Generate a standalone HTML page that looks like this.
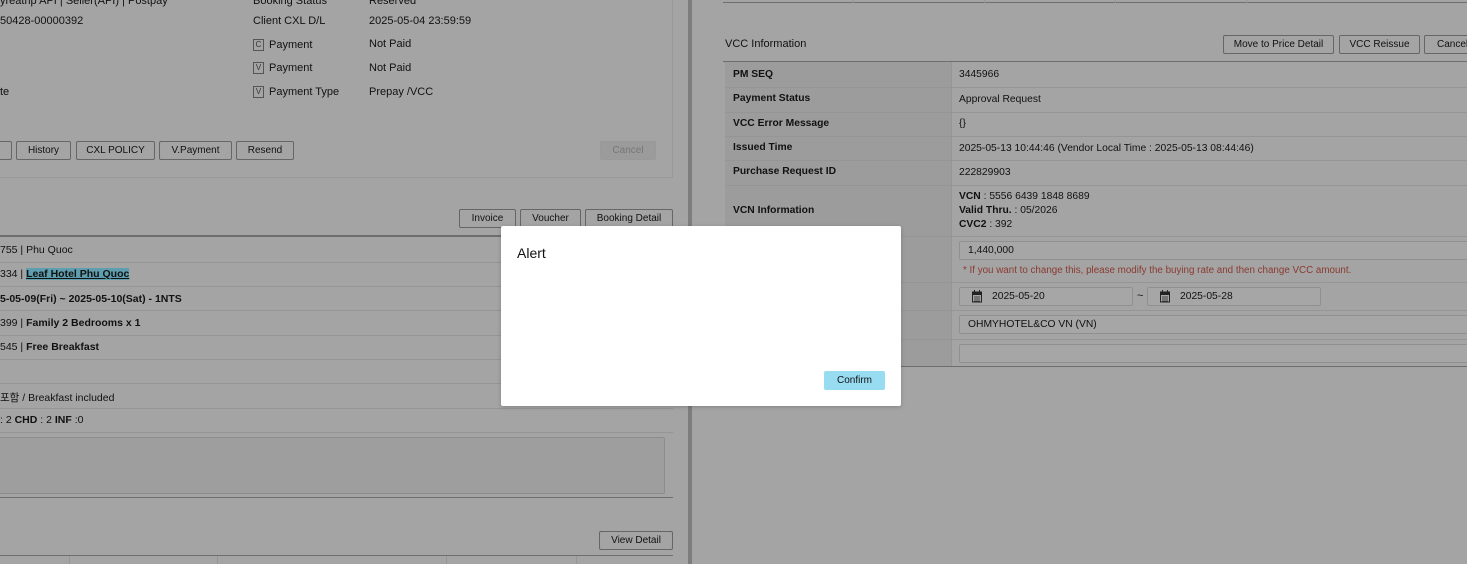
<!DOCTYPE html>
<html><head><meta charset="utf-8"><style>
*{margin:0;padding:0;box-sizing:border-box}
body{width:1467px;height:564px;overflow:hidden;background:#a4a4a4;font-family:"Liberation Sans","Noto Sans CJK KR",sans-serif;font-size:11px;color:#111;position:relative}
.a{position:absolute;white-space:nowrap}
.b{font-weight:bold}
.btn{position:absolute;border:1px solid #666;border-radius:2px;height:19px;line-height:18px;text-align:center;font-size:10px;color:#111;background:#a4a4a4}
.hl{position:absolute;height:1px;background:#959595}
.dl{position:absolute;height:2px;background:#6e6e6e}
.vl{position:absolute;width:1px;background:#959595}
.chk{display:inline-block;width:11px;height:12px;border:1px solid #555;font-size:8px;line-height:10px;text-align:center;margin-right:5px;vertical-align:middle;color:#333}
.inp{position:absolute;border:1px solid #909090;border-radius:2px;background:#a6a6a6;height:19px;line-height:18px;padding-left:8px;font-size:10.3px}
.r{font-size:10.3px}
</style></head><body>
<!-- left top -->
<div class="a" style="left:0;top:-5px">yreatrip API | Seller(API) | Postpay</div>
<div class="a" style="left:253px;top:-5px">Booking Status</div>
<div class="a" style="left:369px;top:-5px">Reserved</div>
<div class="a" style="left:0;top:15px">50428-00000392</div>
<div class="a" style="left:253px;top:15px">Client CXL D/L</div>
<div class="a" style="left:369px;top:15px">2025-05-04 23:59:59</div>
<div class="a" style="left:253px;top:39px"><span class="chk">C</span>Payment</div>
<div class="a" style="left:369px;top:38px">Not Paid</div>
<div class="a" style="left:253px;top:62px"><span class="chk">V</span>Payment</div>
<div class="a" style="left:369px;top:62px">Not Paid</div>
<div class="a" style="left:0;top:86px">te</div>
<div class="a" style="left:253px;top:86px"><span class="chk">V</span>Payment Type</div>
<div class="a" style="left:369px;top:86px">Prepay /VCC</div>
<div class="btn" style="left:-5px;top:141px;width:17px"></div>
<div class="btn" style="left:16px;top:141px;width:55px">History</div>
<div class="btn" style="left:76px;top:141px;width:79px">CXL POLICY</div>
<div class="btn" style="left:159px;top:141px;width:73px">V.Payment</div>
<div class="btn" style="left:236px;top:141px;width:58px">Resend</div>
<div class="btn" style="left:600px;top:141px;width:56px;border-color:#999;background:#9b9b9b;color:#777">Cancel</div>
<div class="hl" style="left:0;top:177px;width:673px;background:#999"></div>
<div class="vl" style="left:672px;top:0;height:178px;background:#999"></div>
<div class="btn" style="left:459px;top:209px;width:57px">Invoice</div>
<div class="btn" style="left:520px;top:209px;width:61px">Voucher</div>
<div class="btn" style="left:585px;top:209px;width:88px">Booking Detail</div>
<div class="dl" style="left:0;top:235px;width:673px"></div>
<div class="a" style="left:0;top:244px;font-size:10.5px">755 | Phu Quoc</div>
<div class="hl" style="left:0;top:262px;width:673px"></div>
<div class="a" style="left:0;top:268px;font-size:10.5px">334 | <span class="b" style="text-decoration:underline;background:#5e9eaf">Leaf Hotel Phu Quoc</span></div>
<div class="hl" style="left:0;top:286px;width:673px"></div>
<div class="a b" style="left:0;top:293px;font-size:10.5px">5-05-09(Fri) ~ 2025-05-10(Sat) - 1NTS</div>
<div class="hl" style="left:0;top:310px;width:673px"></div>
<div class="a" style="left:0;top:317px;font-size:10.5px">399 | <span class="b">Family 2 Bedrooms x 1</span></div>
<div class="hl" style="left:0;top:335px;width:673px"></div>
<div class="a" style="left:0;top:341px;font-size:10.5px">545 | <span class="b">Free Breakfast</span></div>
<div class="hl" style="left:0;top:359px;width:673px"></div>
<div class="hl" style="left:0;top:383px;width:673px"></div>
<div class="a" style="left:0;top:390px;font-size:10.5px">포함 / Breakfast included</div>
<div class="hl" style="left:0;top:408px;width:673px"></div>
<div class="a" style="left:0;top:414px;font-size:10.5px">: 2 <b>CHD</b> : 2 <b>INF</b> :0</div>
<div class="hl" style="left:0;top:432px;width:673px"></div>
<div class="a" style="left:-2px;top:437px;width:667px;height:57px;border:1px solid #8c8c8c;background:#9e9e9e;border-radius:2px"></div>
<div class="dl" style="left:0;top:497px;width:673px;height:1px"></div>
<div class="btn" style="left:599px;top:531px;width:74px">View Detail</div>
<div class="dl" style="left:0;top:555px;width:673px;height:1px"></div>
<div class="vl" style="left:69px;top:556px;height:8px"></div>
<div class="vl" style="left:217px;top:556px;height:8px"></div>
<div class="vl" style="left:446px;top:556px;height:8px"></div>
<div class="vl" style="left:576px;top:556px;height:8px"></div>
<!-- divider -->
<div class="a" style="left:688px;top:0;width:4px;height:564px;background:#7d7d7d"></div>
<!-- right -->
<div class="dl" style="left:723px;top:2px;width:744px;height:1px"></div>
<div class="vl" style="left:853px;top:0;height:3px"></div>
<div class="vl" style="left:984px;top:0;height:3px"></div>
<div class="vl" style="left:1115px;top:0;height:3px"></div>
<div class="vl" style="left:1246px;top:0;height:3px"></div>
<div class="a" style="left:725px;top:38px;font-size:11px">VCC Information</div>
<div class="btn" style="left:1223px;top:35px;width:111px">Move to Price Detail</div>
<div class="btn" style="left:1339px;top:35px;width:81px">VCC Reissue</div>
<div class="btn" style="left:1424px;top:35px;width:60px;text-align:left;padding-left:12px">Cancel</div>
<div class="dl" style="left:723px;top:61px;width:744px;height:1px"></div>
<div class="a" style="left:725px;top:62px;width:226px;height:305px;background:#9c9c9c"></div>
<div class="vl" style="left:951px;top:62px;height:305px"></div>
<div class="hl" style="left:725px;top:87px;width:742px"></div>
<div class="hl" style="left:725px;top:112px;width:742px"></div>
<div class="hl" style="left:725px;top:136px;width:742px"></div>
<div class="hl" style="left:725px;top:160px;width:742px"></div>
<div class="hl" style="left:725px;top:185px;width:742px"></div>
<div class="hl" style="left:725px;top:236px;width:742px"></div>
<div class="hl" style="left:725px;top:282px;width:742px"></div>
<div class="hl" style="left:725px;top:310px;width:742px"></div>
<div class="hl" style="left:725px;top:339px;width:742px"></div>
<div class="dl" style="left:723px;top:366px;width:744px;height:1px"></div>
<div class="a b r" style="left:733px;top:69px">PM SEQ</div>
<div class="a r" style="left:959px;top:69px">3445966</div>
<div class="a b r" style="left:733px;top:93px">Payment Status</div>
<div class="a r" style="left:959px;top:94px">Approval Request</div>
<div class="a b r" style="left:733px;top:118px">VCC Error Message</div>
<div class="a r" style="left:959px;top:118px">{}</div>
<div class="a b r" style="left:733px;top:142px">Issued Time</div>
<div class="a r" style="left:959px;top:143px">2025-05-13 10:44:46 (Vendor Local Time : 2025-05-13 08:44:46)</div>
<div class="a b r" style="left:733px;top:166px">Purchase Request ID</div>
<div class="a r" style="left:959px;top:167px">222829903</div>
<div class="a b r" style="left:733px;top:205px">VCN Information</div>
<div class="a r" style="left:959px;top:191px"><b>VCN</b> : 5556 6439 1848 8689</div>
<div class="a r" style="left:959px;top:205px"><b>Valid Thru.</b> : 05/2026</div>
<div class="a r" style="left:959px;top:219px"><b>CVC2</b> : 392</div>
<div class="inp" style="left:959px;top:241px;width:520px">1,440,000</div>
<div class="a" style="left:963px;top:265px;font-size:9.8px;color:#8a3a30">* If you want to change this, please modify the buying rate and then change VCC amount.</div>
<div class="inp" style="left:959px;top:287px;width:174px;padding-left:32px">2025-05-20</div>
<div class="a" style="left:1137px;top:290px">~</div>
<div class="inp" style="left:1147px;top:287px;width:174px;padding-left:32px">2025-05-28</div>
<svg class="a" style="left:972px;top:290px" width="10" height="13" viewBox="0 0 10 13"><rect x="0.5" y="2" width="9" height="10" fill="#a6a6a6" stroke="#222"/><rect x="0.5" y="2" width="9" height="3" fill="#222"/><rect x="2" y="0" width="1" height="3" fill="#222"/><rect x="7" y="0" width="1" height="3" fill="#222"/><path d="M2 7h6M2 9h6M2 11h6" stroke="#222" stroke-width="0.8"/></svg>
<svg class="a" style="left:1160px;top:290px" width="10" height="13" viewBox="0 0 10 13"><rect x="0.5" y="2" width="9" height="10" fill="#a6a6a6" stroke="#222"/><rect x="0.5" y="2" width="9" height="3" fill="#222"/><rect x="2" y="0" width="1" height="3" fill="#222"/><rect x="7" y="0" width="1" height="3" fill="#222"/><path d="M2 7h6M2 9h6M2 11h6" stroke="#222" stroke-width="0.8"/></svg>
<div class="inp" style="left:959px;top:315px;width:520px">OHMYHOTEL&amp;CO VN (VN)</div>
<div class="inp" style="left:959px;top:344px;width:520px"></div>
<!-- modal -->
<div class="a" style="left:501px;top:226px;width:400px;height:180px;background:#fff;border-radius:2px;box-shadow:0 1px 4px rgba(0,0,0,.2)">
<div class="a" style="left:16px;top:19px;font-size:14px;color:#111">Alert</div>
<div class="a" style="left:323px;top:145px;width:61px;height:19px;background:#97dcf0;border-radius:2px;font-size:10px;line-height:19px;text-align:center;color:#111">Confirm</div>
</div>
</body></html>
